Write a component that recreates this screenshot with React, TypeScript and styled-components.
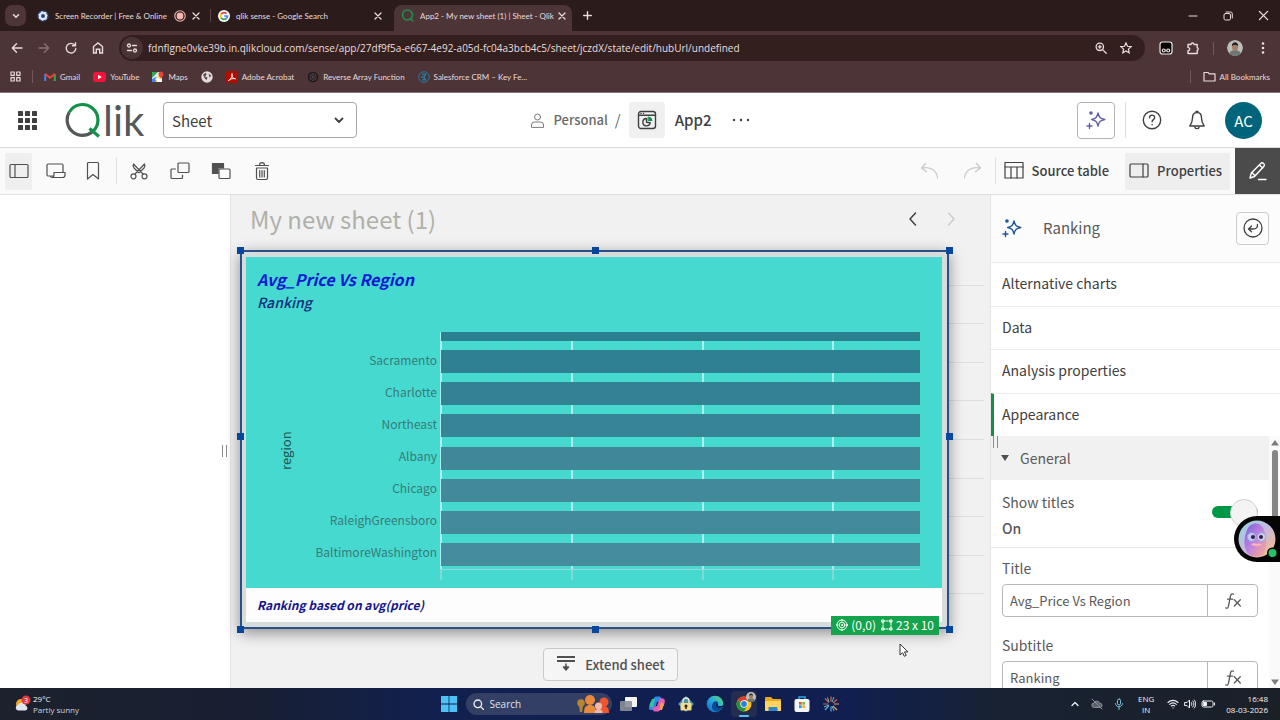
import React from "react";
import styled, { createGlobalStyle } from "styled-components";

const qlikFont = `"Noto Sans CJK SC", "Noto Sans", sans-serif`;
const chromeFont = `"Open Sans", "Noto Sans", sans-serif`;
const smallChromeFont = `Lato, "Open Sans", sans-serif`;

const GlobalStyle = createGlobalStyle`
  * { box-sizing: border-box; }
  body { margin: 0; background: #fff; }
  button { font: inherit; color: inherit; background: none; border: 0; padding: 0; display: inline-flex; align-items: center; justify-content: center; }
  h1, h2, p { margin: 0; font-weight: 400; }
  svg { display: block; flex: none; }
`;

const Page = styled.div`
  display: flex;
  flex-direction: column;
  height: 100vh;
  min-height: 600px;
  overflow: hidden;
  font-family: ${qlikFont};
  color: #404040;
`;

/* ---------- Browser chrome ---------- */

const Browser = styled.div`
  background: #4d3437;
  font-family: ${chromeFont};
  color: #e9dcdc;
  border-bottom: 1px solid #85777a;
`;

const TabStrip = styled.div`
  display: flex;
  align-items: center;
  height: 31px;
  padding-left: 5px;
  background: #2c1b1b;
  font-family: ${smallChromeFont};
  font-size: 8px;
`;

const TabSearch = styled.button`
  width: 21px;
  height: 21px;
  border-radius: 7px;
  background: #4e3538;
  margin-right: 8px;
`;

const Tab = styled.div<{ $active?: boolean; $width: number }>`
  display: flex;
  align-items: center;
  gap: 6px;
  width: ${(p) => p.$width}px;
  height: 26px;
  margin-top: ${(p) => (p.$active ? 5 : 0)}px;
  margin-left: ${(p) => (p.$active ? 6 : 0)}px;
  padding: 0 6px 0 ${(p) => (p.$active ? 7 : 3)}px;
  border-radius: 8px 8px 0 0;
  background: ${(p) => (p.$active ? "#4d3437" : "transparent")};
  padding-bottom: ${(p) => (p.$active ? 5 : 0)}px;
`;

const TabTitle = styled.span`
  flex: 1;
  min-width: 0;
  white-space: nowrap;
  line-height: 16px;
`;

const TabDivider = styled.span`
  width: 1px;
  height: 13px;
  margin: 0 4px;
  background: #5b4345;
`;

const WindowControls = styled.div`
  display: flex;
  align-items: center;
  gap: 25px;
  margin-left: auto;
  padding-right: 11px;
`;

const AddressRow = styled.div`
  display: flex;
  align-items: center;
  height: 34px;
  padding: 0 10px 0 10px;
`;

const NavButtons = styled.div`
  display: flex;
  align-items: center;
  gap: 13px;
  margin-right: 14px;
`;

const AddressBar = styled.label`
  flex: 1;
  display: flex;
  align-items: center;
  gap: 13px;
  height: 26px;
  padding: 0 13px 0 2px;
  border-radius: 13px;
  background: #341f1f;
`;

const SiteInfo = styled.button`
  width: 22px;
  height: 22px;
  border-radius: 50%;
  background: #4a3335;
  margin-right: -8px;
`;

const UrlInput = styled.input`
  flex: 1;
  min-width: 0;
  border: 0;
  padding: 0;
  background: none;
  outline: none;
  font-family: ${chromeFont};
  font-size: 10px;
  line-height: 16px;
  color: #e9dede;
`;

const BrowserTools = styled.div`
  display: flex;
  align-items: center;
  gap: 13px;
  margin-left: 14px;
`;

const Avatar = styled.span`
  display: flex;
  width: 16px;
  height: 16px;
  border-radius: 50%;
  overflow: hidden;
`;

const Bookmarks = styled.nav`
  display: flex;
  align-items: center;
  height: 27px;
  padding: 0 10px 4px;
  font-family: ${smallChromeFont};
  font-size: 8px;
`;

const BookmarkLink = styled.a`
  display: flex;
  align-items: center;
  gap: 4px;
  margin-right: 13px;
  line-height: 14px;
  color: inherit;
  text-decoration: none;
  white-space: nowrap;
`;

const BarDivider = styled.span<{ $gap: number }>`
  width: 1px;
  height: 13px;
  margin: 0 ${(p) => p.$gap}px;
  background: #73575a;
`;

/* ---------- App header ---------- */

const Header = styled.header`
  display: flex;
  align-items: center;
  height: 55px;
  flex: none;
  border-bottom: 1px solid #d9d9d9;
  background: #fff;
`;

const HeaderLeft = styled.div`
  flex: 1 1 0;
  display: flex;
  align-items: center;
  padding-left: 18px;
`;

const HeaderRight = styled.div`
  flex: 1 1 0;
  display: flex;
  align-items: center;
  justify-content: flex-end;
  padding-right: 18px;
`;

const Logo = styled.div`
  display: flex;
  align-items: center;
  gap: 2px;
  width: 77px;
  height: 36px;
  margin: 0 21px 0 28px;
  font-family: Lato, sans-serif;
  font-size: 42px;
  line-height: 36px;
  color: #545859;
`;

const SheetSelect = styled.div`
  position: relative;
  width: 194px;

  select {
    width: 100%;
    height: 36px;
    padding: 0 8px;
    appearance: none;
    border: 1px solid #a6a6a6;
    border-radius: 4px;
    background: #fff;
    font-family: ${qlikFont};
    font-size: 15px;
    color: #404040;
  }
  svg {
    position: absolute;
    right: 12px;
    top: 12px;
    pointer-events: none;
  }
`;

const Breadcrumb = styled.nav`
  display: flex;
  align-items: center;
  font-size: 15px;
  line-height: 24px;
  font-weight: 500;
`;

const SpaceLink = styled.a`
  display: flex;
  align-items: center;
  gap: 8px;
  font-size: 13px;
  color: #6a6a6a;
  text-decoration: none;
`;

const Slash = styled.span`
  margin: 0 8px 0 7px;
  font-weight: 400;
  color: #6a6a6a;
`;

const AppTile = styled.span`
  display: flex;
  align-items: center;
  justify-content: center;
  width: 36px;
  height: 36px;
  margin-right: 10px;
  border-radius: 3px;
  background: #f0f0f0;
`;

const AssistButton = styled.button`
  width: 38px;
  height: 37px;
  border: 1px solid #b3b3b3;
  border-radius: 4px;
`;

const UserBadge = styled.button`
  width: 37px;
  height: 37px;
  border-radius: 50%;
  background: #00657a;
  color: #fff;
  font-size: 15px;
`;

const VRule = styled.span<{ $h: number }>`
  width: 1px;
  height: ${(p) => p.$h}px;
  background: #dedede;
`;

const MoreButton = styled.button`
  && { margin-left: 20px; }
`;

const HeaderTools = styled.div`
  display: flex;
  align-items: center;
  gap: 19px;
  margin-left: 10px;

  button:first-of-type { margin-right: 7px; margin-left: -3px; }
`;

/* ---------- Edit toolbar ---------- */

const Toolbar = styled.div`
  display: flex;
  align-items: center;
  height: 47px;
  flex: none;
  padding-left: 5px;
  border-bottom: 1px solid #e0e0e0;
  background: #fafafa;
  color: #505050;
`;

const ToolButton = styled.button<{ $active?: boolean }>`
  width: 27px;
  height: 37px;
  margin-right: 10px;
  border-radius: 2px;
  background: ${(p) => (p.$active ? "#efefef" : "transparent")};
`;

const TextToolButton = styled.button<{ $active?: boolean }>`
  gap: 8px;
  height: 37px;
  padding: 0 8px 2px 4px;
  border-radius: 2px;
  background: ${(p) => (p.$active ? "#eeeeee" : "transparent")};
  font-size: 13px;
  font-weight: 500;
  white-space: nowrap;
  color: #404040;
`;

const EditToggle = styled.button`
  width: 45px;
  height: 46px;
  margin-left: 5px;
  background: #4b4b4b;
  color: #fff;
`;

const ToolGroup = styled.div`
  display: flex;
  gap: 21px;
  margin-left: 12px;
`;

const HistoryGroup = styled.div`
  display: flex;
  gap: 22px;
  margin: 0 13px 0 auto;
`;

const PanelToggles = styled.div`
  display: flex;
  gap: 8px;
  margin-left: 4px;
`;

/* ---------- Main area ---------- */

const Main = styled.main`
  display: flex;
  flex: 1;
  min-height: 0;
`;

const AssetPanel = styled.aside`
  display: flex;
  align-items: center;
  justify-content: flex-end;
  width: 231px;
  flex: none;
  padding: 18px 3px 0 0;
  border-right: 1px solid #e2e2e2;
  background: #fff;
`;

const SplitGrip = styled.span`
  display: block;
  width: 5px;
  height: 12px;
  border: solid #8c8c8c;
  border-width: 0 1px;
`;

const SheetArea = styled.section`
  display: flex;
  flex-direction: column;
  flex: 1;
  min-width: 0;
  background: #f1f1f1;
`;

const SheetHeader = styled.div`
  display: flex;
  align-items: center;
  justify-content: space-between;
  height: 52px;
  padding: 0 31px 5px 19px;
`;

const SheetTitle = styled.h1`
  font-size: 24px;
  line-height: 36px;
  color: #b0b0aa;
`;

const Pager = styled.div`
  display: flex;
  gap: 22px;
`;

const Canvas = styled.div`
  position: relative;
  display: flex;
  flex: 1;
  min-height: 0;
  margin: 0 6px 0 9px;
  padding: 3px 35px 3px 0;
`;

const GridRows = styled.div`
  position: absolute;
  inset: 0;
  display: flex;
  flex-direction: column;

  span { flex: 1; border-bottom: 1px solid #dedede; }
  span:last-child { border: 0; }
`;

const SelectedObject = styled.div`
  position: relative;
  display: flex;
  flex-direction: column;
  flex: 1;
  min-width: 0;
  padding: 5px 5px 5px 4px;
  border: 2px solid #2a4f86;
  background: #d6dcdc;
  box-shadow: 0 4px 14px rgba(0, 0, 0, 0.42);
`;

const HandleLayer = styled.div`
  position: absolute;
  inset: -2px;
  pointer-events: none;
`;

const Handle = styled.span<{ $x: number; $y: number }>`
  position: absolute;
  left: ${(p) => p.$x}%;
  top: ${(p) => p.$y}%;
  width: 7px;
  height: 7px;
  margin: -3px;
  background: #04479c;
`;

const ChartCard = styled.div`
  display: flex;
  flex-direction: column;
  flex: 1;
  min-height: 0;
  padding: 10px 22px 8px 11px;
  background: #46d9cf;
`;

const ChartTitle = styled.h2`
  font-size: 16px;
  line-height: 24px;
  font-weight: 700;
  font-style: italic;
  color: #1018d2;
`;

const ChartSubtitle = styled.p`
  font-size: 14px;
  line-height: 22px;
  font-weight: 500;
  font-style: italic;
  color: #10307e;
`;

const ChartBody = styled.div`
  display: flex;
  flex: 1;
  min-height: 0;
  margin-top: 19px;
`;

const AxisTitle = styled.div`
  width: 38px;
  padding: 10px 20px 0 0;
  writing-mode: vertical-rl;
  transform: rotate(180deg);
  text-align: center;
  font-size: 13px;
  line-height: 18px;
  color: #24544f;
`;

const Plot = styled.div`
  position: relative;
  flex: 1;
  display: flex;
  flex-direction: column;
  padding-bottom: 10px;
`;

const GridLines = styled.div`
  position: absolute;
  inset: 0 0 0 146px;
  display: grid;
  grid-template-columns: 131fr 131fr 130fr 87fr;

  span {
    width: 2px;
    margin-left: -1px;
    background: linear-gradient(0deg, #7fd9d4 11px, #a9f1ea 11px);
  }
`;

const BarRows = styled.div`
  position: relative;
  display: flex;
  flex: 1;
  flex-direction: column;
  justify-content: space-between;
  padding-bottom: 4px;

  &::after {
    content: "";
    position: absolute;
    inset: auto 0 0 146px;
    height: 1px;
    background: #9bd8d8;
  }
`;

const BarRow = styled.div<{ $h: number }>`
  display: flex;
  align-items: center;
  height: ${(p) => p.$h}px;
`;

const BarLabel = styled.span`
  width: 146px;
  flex: none;
  padding: 0 4px 4px 0;
  text-align: right;
  font-size: 12px;
  line-height: 20px;
  color: #367c78;
`;

const Bar = styled.span`
  flex: 1;
  height: 100%;
`;

const ChartFooter = styled.p`
  height: 34px;
  padding-left: 11px;
  background: #fdfdfd;
  font-size: 12px;
  line-height: 34px;
  font-weight: 700;
  font-style: italic;
  color: #15158c;
`;

const SizeBadge = styled.div`
  position: absolute;
  right: 8px;
  bottom: -8px;
  display: flex;
  align-items: center;
  gap: 3px;
  height: 19px;
  padding: 0 5px 1px;
  background: #14a44d;
  color: #fff;
  font-size: 12px;
  line-height: 18px;
  white-space: nowrap;

  svg + span { margin-right: 2px; }
  span:last-child { margin-right: 0; }
`;

const Pointer = styled.svg`
  position: absolute;
  right: 75px;
  bottom: -25px;
`;

const SheetFooter = styled.div`
  display: flex;
  align-items: center;
  justify-content: center;
  height: 56px;
  padding-top: 9px;
`;

const ExtendButton = styled.button`
  gap: 9px;
  height: 33px;
  padding: 0 12px 1px;
  border: 1px solid #c9c9c9;
  border-radius: 4px;
  background: #f5f5f5;
  font-size: 13px;
  font-weight: 500;
  color: #505050;
`;

/* ---------- Properties panel ---------- */

const Properties = styled.aside`
  position: relative;
  display: flex;
  flex-direction: column;
  width: 290px;
  flex: none;
  border-left: 1px solid #e4e4e4;
  background: #fff;
  font-size: 14px;
`;

const PanelHeader = styled.div`
  display: flex;
  align-items: center;
  height: 67px;
  flex: none;
  padding: 0 11px 1px;
  background: #fcfcfc;

  h2 { flex: 1; margin-left: 21px; font-size: 15px; line-height: 24px; color: #595959; }
`;

const BackButton = styled.button`
  width: 33px;
  height: 33px;
  border: 1px solid #cccccc;
  border-radius: 4px;
`;

const SectionList = styled.div`
  display: flex;
  flex-direction: column;
  height: 174px;
  flex: none;
`;

const SectionButton = styled.button<{ $active?: boolean }>`
  flex: 1;
  justify-content: flex-start;
  padding: 0 0 2px ${(p) => (p.$active ? 8 : 11)}px;
  border-top: 1px solid #ebebeb;
  border-left: ${(p) => (p.$active ? "3px solid #10914a" : "0")};
  color: #404040;
`;

const SectionScroll = styled.div`
  display: flex;
  flex: 1;
  min-height: 0;
  overflow: hidden;
`;

const SectionContent = styled.div`
  flex: 1;
  min-width: 0;
  color: #595959;
`;

const GroupButton = styled.button`
  && {
    width: 100%;
    height: 44px;
    justify-content: flex-start;
    gap: 10px;
    padding: 0 0 1px 9px;
    background: #f1f1f1;
  }
`;

const ToggleField = styled.label`
  display: flex;
  align-items: center;
  justify-content: space-between;
  height: 68px;
  padding: 0 11px;
  border-bottom: 1px solid #e8e8e8;
  line-height: 26px;

  > span { padding-top: 3px; }
  strong { display: block; font-weight: 500; }
`;

const Switch = styled.input`
  appearance: none;
  position: relative;
  width: 46px;
  height: 12px;
  margin: 0 0 4px;
  border-radius: 6px;
  background: #009845;

  &::after {
    content: "";
    position: absolute;
    right: 0;
    top: -7px;
    width: 26px;
    height: 26px;
    border: 1px solid #d0d0d0;
    border-radius: 50%;
    background: #f4f4f4;
  }
`;

const TextField = styled.div`
  padding: 8px 11px 0;
  height: 77px;

  label { display: block; height: 28px; line-height: 24px; }
`;

const InputGroup = styled.div`
  display: flex;
  height: 33px;
  border: 1px solid #b8b8b8;
  border-radius: 4px;

  input {
    flex: 1;
    min-width: 0;
    padding: 0 7px;
    border: 0;
    background: none;
    font-family: ${qlikFont};
    font-size: 13px;
    color: #595959;
  }
  button { width: 50px; border-left: 1px solid #b8b8b8; }
`;

const ScrollTrack = styled.div`
  display: flex;
  flex-direction: column;
  align-items: center;
  justify-content: space-between;
  width: 11px;
  padding: 3px 0 2px;
  background: #fafafa;
`;

const ScrollThumb = styled.span`
  width: 6px;
  height: 84px;
  margin: 4px 0 auto;
  border-radius: 3px;
  background: #868686;
`;

const PanelGrip = styled.div`
  position: absolute;
  left: 2px;
  top: 241px;
`;

const AssistantBubble = styled.button`
  position: absolute;
  right: 0;
  top: 321px;
  width: 46px;
  height: 46px;
  border-radius: 23px 0 0 23px;
  background: #050505;
`;

/* ---------- Taskbar ---------- */

const Taskbar = styled.footer`
  display: grid;
  grid-template-columns: 1fr auto 1fr;
  align-items: center;
  height: 32px;
  flex: none;
  background: linear-gradient(90deg, #1c212c 0%, #181f33 20%, #11204f 34%, #101f50 66%, #182233 78%, #1b2027 100%);
  font-family: ${chromeFont};
  font-size: 8px;
  line-height: 11px;
  color: #f0f2f5;
`;

const Weather = styled.div`
  display: flex;
  align-items: center;
  gap: 2px;
  padding-left: 13px;
  small { display: block; font-size: 8px; color: #cfd3da; }
`;

const TaskApps = styled.div`
  display: flex;
  align-items: center;
  gap: 11px;
`;

const TaskSearch = styled.label`
  display: flex;
  align-items: center;
  gap: 6px;
  width: 146px;
  height: 22px;
  margin: 0 -3px 0 -2px;
  padding: 0 2px 0 7px;
  border-radius: 11px;
  background: #343f66;

  input {
    flex: 1;
    min-width: 0;
    padding: 0;
    border: 0;
    background: none;
    font-family: ${chromeFont};
    font-size: 10px;
    color: #fff;
  }
  input::placeholder { color: #dfe3ec; opacity: 1; }
`;

const Tray = styled.div`
  display: flex;
  align-items: center;
  justify-content: flex-end;
  gap: 5px;
  padding-right: 12px;
  text-align: right;
`;

const TrayIcons = styled.span`
  display: flex;
  gap: 11px;
`;

const Lang = styled.span`
  margin: 0 8px 0 9px;
  text-align: center;
`;

const Clock = styled.span`
  margin-left: 6px;
`;

const ActiveApp = styled.span`
  position: relative;
  display: flex;
  align-items: center;
  justify-content: center;
  width: 26px;
  height: 26px;
  margin: 0 -4px;
  border-radius: 4px;
  background: #242c4f;

  &::after {
    content: "";
    position: absolute;
    bottom: 0;
    width: 10px;
    height: 2px;
    border-radius: 1px;
    background: #5cc0f0;
  }
`;

const MiniAvatar = styled.span`
  position: absolute;
  right: 1px;
  top: 1px;
`;

/* ---------- Browser helpers ---------- */

const NewTabGap = styled.span`
  width: 11px;
`;

const PushRight = styled.span`
  flex: 1;
`;

const VRuleDark = styled.span`
  width: 1px;
  height: 13px;
  background: #73575a;
`;

const FolderLink = styled(BookmarkLink)`
  margin-right: 0;
`;

/* ---------- Icons ---------- */

type IconProps = {
  w?: number;
  h?: number;
  box?: string;
  sw?: number;
  color?: string;
  children: React.ReactNode;
};

const Icon = ({ w = 20, h, box, sw = 1.2, color = "currentColor", children }: IconProps) => (
  <svg
    width={w}
    height={h ?? w}
    viewBox={box ?? `0 0 ${w} ${h ?? w}`}
    fill="none"
    stroke={color}
    strokeWidth={sw}
    strokeLinecap="round"
    strokeLinejoin="round"
    aria-hidden="true"
  >
    {children}
  </svg>
);

const CloseIcon = ({ size = 8, sw = 1.3 }: { size?: number; sw?: number }) => (
  <Icon w={size} box="0 0 8 8" sw={sw}><path d="M1 1l6 6M7 1L1 7" /></Icon>
);

const SparkIcon = ({ color }: { color: string }) => (
  <Icon w={20} sw={1.4} color={color}>
    <path d="M12 3c.9 4.200 2.200 5.500 6.800 6.500-4.600 1-5.900 2.300-6.800 6.500-.9-4.200-2.200-5.500-6.300-6.500C9.800 8.500 11.100 7.200 12 3z" />
    <circle cx="5" cy="3" r="1.100" fill={color} />
    <path d="M3.500 13.500v5M1 16h5" />
  </Icon>
);

const FxIcon = () => (
  <Icon w={18} sw={1.3}>
    <path d="M9.500 2.200C7.500 1 6.700 2.800 6.400 4.500L4.500 14c-.3 1.700-1.200 2.700-2.700 1.900M3.500 7.200h5.200M10.300 7.700l6 6.300M16.300 7.700l-6 6.300" />
  </Icon>
);

const ChromeLogo = () => (
  <svg width="16" height="16" viewBox="0 0 16 16" aria-hidden="true">
    <circle cx="8" cy="8" r="7.500" fill="#fbc116" />
    <path d="M8 8L1.500 4.250A7.500 7.500 0 0 1 14.500 4.250L8 4.250z" fill="#e33b2e" />
    <path d="M8 8L1.500 4.250A7.500 7.500 0 0 0 8 15.500L11.200 9.900z" fill="#229342" />
    <circle cx="8" cy="8" r="3.700" fill="#fff" />
    <circle cx="8" cy="8" r="2.900" fill="#2f7de1" />
  </svg>
);

const Portrait = ({ size = 16 }: { size?: number }) => (
  <svg width={size} height={size} viewBox="0 0 16 16" aria-hidden="true">
    <circle cx="8" cy="8" r="8" fill="#b9c0b8" />
    <path d="M2 14c1-3 3-4 6-4s5 1 6 4l-3 2H5z" fill="#6f7775" />
    <ellipse cx="8" cy="7" rx="3" ry="4" fill="#a87c65" />
    <path d="M4.800 6c0-5 6.400-5 6.400 0-1.500-1.500-5-1.500-6.400 0z" fill="#2a2422" />
  </svg>
);

const bars = [
  { label: "Sacramento", color: "#2f8093" },
  { label: "Charlotte", color: "#338294" },
  { label: "Northeast", color: "#368496" },
  { label: "Albany", color: "#3f8799" },
  { label: "Chicago", color: "#42899b" },
  { label: "RaleighGreensboro", color: "#438b9c" },
  { label: "BaltimoreWashington", color: "#458d9e" },
];

const handles = [
  [0, 0], [50, 0], [100, 0],
  [0, 49], [100, 49],
  [0, 100], [50, 100], [100, 100],
];

const BrowserChrome = () => (
  <Browser>
    <TabStrip>
      <TabSearch aria-label="Search tabs">
        <Icon w={8} sw={1.5}><path d="M1.500 2.700L4 5.200l2.500-2.500" /></Icon>
      </TabSearch>
      <Tab $width={172}>
        <svg width="12" height="12" viewBox="0 0 12 12">
          <circle cx="6" cy="6" r="5" fill="#dfe8f7" />
          <circle cx="6" cy="6" r="5" fill="none" stroke="#2a4c8f" strokeWidth="1.500" strokeDasharray="3 1.500" />
          <circle cx="6" cy="6" r="2" fill="#27457f" />
        </svg>
        <TabTitle>Screen Recorder | Free &amp; Online</TabTitle>
        <Icon w={12} box="0 0 11 11" sw={1} color="#f3b9ae"><circle cx="5.500" cy="5.500" r="4.800" /><circle cx="5.500" cy="5.500" r="2.600" fill="#f3b9ae" /></Icon>
        <CloseIcon />
      </Tab>
      <TabDivider />
      <Tab $width={173}>
        <svg width="12" height="12" viewBox="0 0 12 12">
          <circle cx="6" cy="6" r="6" fill="#fff" />
          <g fill="none" strokeWidth="1.700">
            <path d="M8.600 3.700A3.500 3.500 0 0 0 3 4.300" stroke="#ea4335" />
            <path d="M3 4.300a3.500 3.500 0 0 0 0 3.400" stroke="#fbbc05" />
            <path d="M3 7.700a3.500 3.500 0 0 0 5.300.8" stroke="#34a853" />
            <path d="M8.300 8.500A3.500 3.500 0 0 0 9.500 6H6.200" stroke="#4285f4" />
          </g>
        </svg>
        <TabTitle>qlik sense - Google Search</TabTitle>
        <CloseIcon />
      </Tab>
      <Tab $active $width={178}>
        <Icon w={13} sw={1.500} color="#19944a"><circle cx="6.500" cy="6" r="5" /><path d="M9 9.500l3 2.500" /></Icon>
        <TabTitle>App2 - My new sheet (1) | Sheet - Qlik</TabTitle>
        <CloseIcon />
      </Tab>
      <NewTabGap />
      <Icon w={9} sw={1.400}><path d="M4.500.7v7.600M.7 4.500h7.600" /></Icon>
      <WindowControls>
        <Icon w={10} sw={1}><path d="M1 5h8" /></Icon>
        <Icon w={10} sw={1}><rect x="1" y="2.500" width="6.500" height="6.500" rx="1.500" /><path d="M3 1h4.500A1.800 1.800 0 0 1 9.300 2.800V7" /></Icon>
        <CloseIcon size={11} sw={1} />
      </WindowControls>
    </TabStrip>
    <AddressRow>
      <NavButtons>
        <Icon w={14} sw={1.400}><path d="M12 7H2.500M6.500 2.800L2.300 7l4.200 4.200" /></Icon>
        <Icon w={14} sw={1.400} color="#8b7174"><path d="M2 7h9.500M7.500 2.800L11.700 7l-4.200 4.200" /></Icon>
        <Icon w={14} sw={1.400}><path d="M11 4.500A4.800 4.800 0 1 0 11.800 7.500M11.500 1.800v3H8.400" /></Icon>
        <Icon w={14} sw={1.400}><path d="M2.500 12V5.500L7 2l4.500 3.500V12H8.700V8.300H5.300V12z" strokeLinejoin="miter" /></Icon>
      </NavButtons>
      <AddressBar>
        <SiteInfo aria-label="Site information">
          <Icon w={12} sw={1.300}><circle cx="3" cy="3.500" r="1.500" /><path d="M6.500 3.500h4M1.500 8.500h4" /><circle cx="9" cy="8.500" r="1.500" /></Icon>
        </SiteInfo>
        <UrlInput
          aria-label="Address"
          defaultValue="fdnflgne0vke39b.in.qlikcloud.com/sense/app/27df9f5a-e667-4e92-a05d-fc04a3bcb4c5/sheet/jczdX/state/edit/hubUrl/undefined"
        />
        <Icon w={12} sw={1.300}><circle cx="4.800" cy="4.800" r="3.700" /><path d="M7.600 7.600l3.600 3.600M3.300 4.800h3M4.800 3.300v3" /></Icon>
        <Icon w={12} sw={1.200}><path d="M6 .9l1.500 3.400 3.700.3-2.800 2.500.8 3.700L6 8.900l-3.200 1.900.8-3.700L.8 4.600l3.700-.3z" strokeLinejoin="miter" /></Icon>
      </AddressBar>
      <BrowserTools>
        <Icon w={14} sw={1.200} color="#f2ecec"><rect x="1" y="1" width="12" height="12" rx="2.500" fill="#050505" /><circle cx="4.800" cy="9.500" r="1.500" /><circle cx="9.200" cy="9.500" r="1.500" /></Icon>
        <Icon w={14} sw={1.400}><path d="M2 3.500h3a1.500 1.500 0 0 1 3 0h3.200v3.200a1.500 1.500 0 0 1 0 2.800V12.500H2V9.800a1.700 1.700 0 0 0 0-3.400z" /></Icon>
        <VRuleDark />
        <Avatar><Portrait /></Avatar>
        <Icon w={14} sw={0}><g fill="#eee2e2"><circle cx="7" cy="2.500" r="1.300" /><circle cx="7" cy="7" r="1.300" /><circle cx="7" cy="11.500" r="1.300" /></g></Icon>
      </BrowserTools>
    </AddressRow>
    <Bookmarks>
      <Icon w={11} sw={1.200}><rect x="1" y="1" width="3.300" height="3.300" /><rect x="6.700" y="1" width="3.300" height="3.300" /><rect x="1" y="6.700" width="3.300" height="3.300" /><rect x="6.700" y="6.700" width="3.300" height="3.300" /></Icon>
      <BarDivider $gap={11} />
      <BookmarkLink href="#gmail">
        <svg width="12" height="10" viewBox="0 0 12 10" fill="none" strokeWidth="2">
          <path d="M1.200 9V2" stroke="#4285f4" /><path d="M10.800 9V2" stroke="#34a853" /><path d="M1 1.800l5 4 5-4" stroke="#ea4335" />
        </svg>
        Gmail
      </BookmarkLink>
      <BookmarkLink href="#youtube">
        <svg width="13" height="10" viewBox="0 0 13 10"><rect width="13" height="10" rx="3" fill="#f5133a" /><path d="M5 2.800v4.400L8.800 5z" fill="#fff" /></svg>
        YouTube
      </BookmarkLink>
      <BookmarkLink href="#maps">
        <svg width="12" height="12" viewBox="0 0 12 12">
          <rect x="0" y="1" width="10" height="10" fill="#e7ecef" /><path d="M0 1h6L0 7z" fill="#34a853" /><path d="M0 11L9 2l1 1v3L5 11z" fill="#fbd04a" /><path d="M0 8v3h3l3-3-2-2z" fill="#4285f4" /><path d="M6 6l4 5H6L3 8z" fill="#fff" />
          <path d="M9 7.500C7 5 6.500 4.300 6.500 3a2.500 2.500 0 0 1 5 0c0 1.300-.5 2-2.500 4.500z" fill="#ea4335" />
        </svg>
        Maps
      </BookmarkLink>
      <BookmarkLink href="#site" aria-label="Website">
        <svg width="12" height="12" viewBox="0 0 12 12"><circle cx="6" cy="6" r="5.700" fill="#e4dcdc" /><path d="M2 3.500l3-1.800.5 2L4 5.500l2.500 1L5.500 9 3.800 7.500zM7.500 2.500l2.800 2.300L8.500 6.500z" fill="#59474a" /></svg>
      </BookmarkLink>
      <BookmarkLink href="#acrobat">
        <svg width="12" height="12" viewBox="0 0 12 12"><rect width="12" height="12" rx="2" fill="#b30b00" /><path d="M2.500 9.500C6 7.500 6.500 4 6 2.500 5.300 5.500 7 7.500 9.500 7.800 7 7.200 4.500 7.800 2.500 9.500z" fill="none" stroke="#fff" /></svg>
        Adobe Acrobat
      </BookmarkLink>
      <BookmarkLink href="#array">
        <svg width="12" height="12" viewBox="0 0 12 12"><circle cx="6" cy="6" r="5.200" fill="#1b1718" /><path d="M3 4l3-1.700L9 4v4L6 9.700 3 8zM3 4l6 4M9 4L3 8M6 2.300v7.400" fill="none" stroke="#56494b" strokeWidth=".8" /></svg>
        Reverse Array Function
      </BookmarkLink>
      <BookmarkLink href="#salesforce">
        <svg width="12" height="12" viewBox="0 0 12 12" fill="none" stroke="#2a789f"><circle cx="6" cy="6" r="5.300" /><path d="M4.200 3.200h3.300L5.800 6l1.700 2.800H4.200M3 6h3" strokeWidth="1.500" /></svg>
        Salesforce CRM – Key Fe...
      </BookmarkLink>
      <PushRight />
      <BarDivider $gap={12} />
      <FolderLink href="#all">
        <Icon w={13} h={11} sw={1.200}><path d="M1 1.500h4l1.300 1.300H12V10H1z" /></Icon>
        All Bookmarks
      </FolderLink>
    </Bookmarks>
  </Browser>
);

const AppHeader = () => (
  <Header>
    <HeaderLeft>
      <button aria-label="App launcher">
        <svg width="19" height="19" viewBox="0 0 19 19" fill="#404040">
          {[0, 7, 14].map((y) => [0, 7, 14].map((x) => <rect key={`${x}-${y}`} x={x} y={y} width="5" height="5" rx=".6" />))}
        </svg>
      </button>
      <Logo aria-label="Qlik">
        <svg width="36" height="36" viewBox="0 0 36 36" fill="none" strokeWidth="3.200">
          <path d="M4.200 10.300A15.400 15.400 0 0 0 27.400 29.800" stroke="#545859" />
          <path d="M4.200 10.300A15.400 15.400 0 1 1 27.400 29.800" stroke="#10924b" />
          <path d="M24.500 26.500l9.500 8" stroke="#10924b" />
        </svg>
        <span>lik</span>
      </Logo>
      <SheetSelect>
        <select aria-label="View" defaultValue="Sheet"><option>Sheet</option></select>
        <Icon w={12} sw={1.800}><path d="M2.500 4.500L6 8l3.500-3.500" /></Icon>
      </SheetSelect>
    </HeaderLeft>
    <Breadcrumb>
      <SpaceLink href="#personal">
        <Icon w={15} sw={1} color="#7a7a7a"><circle cx="7.500" cy="4" r="3" /><path d="M1.500 14v-2a3 3 0 0 1 3-3h6a3 3 0 0 1 3 3v2z" /></Icon>
        Personal
      </SpaceLink>
      <Slash>/</Slash>
      <AppTile>
        <Icon w={20} sw={1.400}>
          <rect x="1.500" y="1.500" width="17" height="17" rx="2.500" />
          <path d="M2 5.200h16" /><path d="M4 3.400h.1M6.500 3.400h.1" />
          <path d="M9.500 8.500a3.700 3.700 0 1 0 3.700 4.200l-3.700-.5z" />
          <path d="M11.500 7a3.700 3.700 0 0 1 3.500 3.500h-3.500z" fill="#10924b" stroke="#10924b" strokeWidth="1" />
        </Icon>
      </AppTile>
      App2
      <MoreButton aria-label="More">
        <Icon w={18} sw={0}><g fill="#404040"><circle cx="2" cy="9" r="1.200" /><circle cx="9" cy="9" r="1.200" /><circle cx="16" cy="9" r="1.200" /></g></Icon>
      </MoreButton>
    </Breadcrumb>
    <HeaderRight>
      <AssistButton aria-label="Assistant"><SparkIcon color="#655dab" /></AssistButton>
      <HeaderTools>
        <VRule $h={36} />
        <button aria-label="Help"><Icon w={20} sw={1.400}><circle cx="10" cy="10" r="8.700" /><path d="M7.500 7.800c0-3.600 5.200-3.400 5.200-.3 0 2-2.600 2.200-2.600 4.200M10.100 14.500v.2" /></Icon></button>
        <button aria-label="Notifications"><Icon w={18} h={20} sw={1.400}><path d="M9 2.500C5.500 2.500 4.500 5 4.500 8c0 4-1.200 6-2.700 8h14.400c-1.500-2-2.700-4-2.700-8 0-3-1-5.500-4.500-5.500zM8 1.500h2M7 17.500c.5 1.500 3.500 1.500 4 0" /></Icon></button>
        <UserBadge>AC</UserBadge>
      </HeaderTools>
    </HeaderRight>
  </Header>
);

const EditToolbar = () => (
  <Toolbar>
    <ToolButton $active aria-label="Assets">
      <Icon><rect x="1" y="3.500" width="18" height="13" rx="1" /><path d="M6 3.500v13" /></Icon>
    </ToolButton>
    <ToolButton aria-label="Sheets">
      <Icon><path d="M4.500 15H2.200A1.200 1.200 0 0 1 1 13.800V4.200A1.200 1.200 0 0 1 2.200 3h13.600A1.200 1.200 0 0 1 17 4.200V11M8 11.500h11v2.500a2.500 2.500 0 0 1-2.500 2.500H6c1.500 0 2-1 2-2.500zM8 14c0 1.500-.5 2.500-2 2.500S4.500 15.500 4.500 15H8" /></Icon>
    </ToolButton>
    <ToolButton aria-label="Bookmarks">
      <Icon><path d="M4.500 2.500a1 1 0 0 1 1-1h9a1 1 0 0 1 1 1V18L10 13.500 4.500 18z" /></Icon>
    </ToolButton>
    <VRule $h={26} />
    <ToolGroup>
      <button aria-label="Cut"><Icon><circle cx="4.500" cy="15.300" r="2.500" /><circle cx="15.500" cy="15.300" r="2.500" /><path d="M6 13L15.500 3c1 1.500.5 2.500-.5 4L10.500 11.500M14 13L4.500 3c-1 1.500-.5 2.500.5 4l4.500 4.500" /></Icon></button>
      <button aria-label="Copy"><Icon><rect x="8" y="2" width="11" height="9.500" rx="1" /><path d="M5.500 8H2a1 1 0 0 0-1 1v7.500a1 1 0 0 0 1 1h9.500a1 1 0 0 0 1-1V14" /></Icon></button>
      <button aria-label="Paste"><Icon><path d="M1.500 2.500h11V7H7v5.500H1.500z" fill="currentColor" /><rect x="8" y="8" width="11" height="9.500" rx="1" /></Icon></button>
      <button aria-label="Delete"><Icon><path d="M3.500 4.500h13M7.500 4.500c0-3.800 5-3.800 5 0M4.500 7v10a1.500 1.500 0 0 0 1.500 1.500h8a1.500 1.500 0 0 0 1.500-1.500V7zM7.700 9.500V16M10 9.500V16M12.300 9.500V16" /></Icon></button>
    </ToolGroup>
    <HistoryGroup>
      <button aria-label="Undo"><Icon color="#c9c9c9"><path d="M5.500 2.500L1.500 7l5 3.800M2 7c8-1.800 15 2.500 15.500 10" /></Icon></button>
      <button aria-label="Redo"><Icon color="#c9c9c9"><path d="M14.500 2.500l4 4.500-5 3.800M18 7C10 5.200 3 9.500 2.500 17" /></Icon></button>
    </HistoryGroup>
    <VRule $h={26} />
    <PanelToggles>
      <TextToolButton>
        <Icon><rect x="1" y="2.500" width="18" height="15.500" /><path d="M1 7h18M7 7v11M13 7v11" /></Icon>
        Source table
      </TextToolButton>
      <TextToolButton $active>
        <Icon><rect x="1" y="4" width="18" height="13" rx="1" /><path d="M14 4v13" /></Icon>
        Properties
      </TextToolButton>
    </PanelToggles>
    <EditToggle aria-label="Edit sheet">
      <Icon sw={1.400}><path d="M2 17l1.300-5L13 2.200c1.500-1.300 4.500 1.300 3 3L6.500 15.500zM11.500 4l3.200 3M4 11.500L6.800 14.500M10.500 18.500H18" /></Icon>
    </EditToggle>
  </Toolbar>
);

const RankingChart = () => (
  <SelectedObject>
    <ChartCard>
      <ChartTitle>Avg_Price Vs Region</ChartTitle>
      <ChartSubtitle>Ranking</ChartSubtitle>
      <ChartBody>
        <AxisTitle>region</AxisTitle>
        <Plot>
          <GridLines><span /><span /><span /><span /></GridLines>
          <BarRows>
            <BarRow $h={9}><BarLabel /><Bar style={{ background: "#2a808f" }} /></BarRow>
            {bars.map((b) => (
              <BarRow key={b.label} $h={23}>
                <BarLabel>{b.label}</BarLabel>
                <Bar style={{ background: b.color }} />
              </BarRow>
            ))}
          </BarRows>
        </Plot>
      </ChartBody>
    </ChartCard>
    <ChartFooter>Ranking based on avg(price)</ChartFooter>
    <HandleLayer>
      {handles.map(([x, y]) => <Handle key={`${x}-${y}`} $x={x} $y={y} />)}
    </HandleLayer>
    <SizeBadge>
      <Icon w={12} sw={1}><circle cx="6" cy="6" r="5" /><circle cx="6" cy="6" r="2.800" /><circle cx="6" cy="6" r=".6" /><path d="M6 0v2M6 10v2M0 6h2M10 6h2" /></Icon>
      <span>(0,0)</span>
      <Icon w={12} sw={1}><rect x="2" y="2" width="8" height="8" strokeDasharray="2 1.200" /><path d="M1 1h2v2H1zM9 1h2v2H9zM1 9h2v2H1zM9 9h2v2H9z" /></Icon>
      <span>23 x 10</span>
    </SizeBadge>
  </SelectedObject>
);

const PropertiesPanel = () => (
  <Properties>
    <PanelHeader>
      <SparkIcon color="#1d5799" />
      <h2>Ranking</h2>
      <BackButton aria-label="Back">
        <Icon sw={1.300}><circle cx="10" cy="10" r="9" /><path d="M14.500 6.500c.3 3-1.500 4.500-4.500 4.500H6M8.500 8L5.500 11l3 2.800" /></Icon>
      </BackButton>
    </PanelHeader>
    <SectionList>
      <SectionButton>Alternative charts</SectionButton>
      <SectionButton>Data</SectionButton>
      <SectionButton>Analysis properties</SectionButton>
      <SectionButton $active>Appearance</SectionButton>
    </SectionList>
    <SectionScroll>
      <SectionContent>
        <GroupButton>
          <svg width="10" height="8" viewBox="0 0 10 8" fill="#505050"><path d="M1 1h8L5 7z" /></svg>
          General
        </GroupButton>
        <ToggleField>
          <span>Show titles<strong>On</strong></span>
          <Switch type="checkbox" role="switch" defaultChecked />
        </ToggleField>
        <TextField>
          <label htmlFor="title">Title</label>
          <InputGroup><input id="title" defaultValue="Avg_Price Vs Region" /><button aria-label="Title expression"><FxIcon /></button></InputGroup>
        </TextField>
        <TextField>
          <label htmlFor="subtitle">Subtitle</label>
          <InputGroup><input id="subtitle" defaultValue="Ranking" /><button aria-label="Subtitle expression"><FxIcon /></button></InputGroup>
        </TextField>
      </SectionContent>
      <ScrollTrack>
        <svg width="8" height="7" viewBox="0 0 8 7" fill="#7d7d7d"><path d="M4 1l4 5.500H0z" /></svg>
        <ScrollThumb />
        <svg width="8" height="7" viewBox="0 0 8 7" fill="#7d7d7d"><path d="M0 .5h8L4 6z" /></svg>
      </ScrollTrack>
    </SectionScroll>
    <PanelGrip><SplitGrip /></PanelGrip>
    <AssistantBubble aria-label="Open assistant">
      <svg width="46" height="46" viewBox="0 0 46 46">
        <defs>
          <linearGradient id="sky" x1="0" y1="0" x2="1" y2="1"><stop offset="0" stopColor="#8fd6dc" /><stop offset=".5" stopColor="#c8b8e0" /><stop offset="1" stopColor="#ffc06e" /></linearGradient>
          <linearGradient id="face" x1="0" y1="0" x2="1" y2="1"><stop offset="0" stopColor="#7a5be0" /><stop offset=".5" stopColor="#c184dd" /><stop offset="1" stopColor="#ffb083" /></linearGradient>
        </defs>
        <circle cx="23" cy="23" r="18.500" fill="url(#sky)" />
        <path d="M14 38C9 30 10 22 13 14c3-8 14-9 17 0 2 6 3 12 2 18l-3 7c-5 3-11 2-15-1z" fill="url(#face)" />
        <g fill="#d9e5f5" fillOpacity=".7" stroke="#7fb7ea"><circle cx="17.500" cy="21" r="4.200" /><circle cx="27.500" cy="21" r="4.200" /></g>
        <circle cx="19" cy="21" r="2" fill="#2d2347" /><circle cx="27" cy="21" r="2" fill="#2d2347" />
        <path d="M17 29c3-3 4-1 5.500-1S26 26.500 28 29c-4 1.500-7 1.500-11 0z" fill="#f7b3b9" />
        <circle cx="38.500" cy="37" r="5.500" fill="#050505" /><circle cx="38.500" cy="37" r="4" fill="#26c267" />
      </svg>
    </AssistantBubble>
  </Properties>
);

const WindowsTaskbar = () => (
  <Taskbar>
    <Weather>
      <svg width="18" height="18" viewBox="0 0 18 18">
        <circle cx="8" cy="9" r="5" fill="#f5a623" /><path d="M5 15.500a2.800 2.800 0 0 1 0-5.500 4 4 0 0 1 7.500.8 2.400 2.400 0 0 1 0 4.700z" fill="#dfe6ef" />
        <circle cx="13" cy="5" r="4.500" fill="#d93a3a" /><text x="13" y="7.500" fontSize="7" textAnchor="middle" fill="#fff">3</text>
      </svg>
      <span>29°C<small>Partly sunny</small></span>
    </Weather>
    <TaskApps>
      <svg width="16" height="16" viewBox="0 0 16 16" fill="#4cc2f5"><path d="M0 0h7.600v7.600H0zM8.400 0H16v7.600H8.400zM0 8.400h7.600V16H0zM8.400 8.400H16V16H8.400z" /></svg>
      <TaskSearch>
        <Icon w={11} sw={1.300}><circle cx="4.800" cy="4.800" r="3.800" /><path d="M7.600 7.600L10.500 10.500" /></Icon>
        <input placeholder="Search" aria-label="Search" />
        <svg width="34" height="20" viewBox="0 0 34 20">
          <g fill="#b5852f"><circle cx="5" cy="9" r="3.800" /><path d="M3 12h4l-1 6H4z" /></g>
          <g fill="#e88a3a"><circle cx="14" cy="6" r="5" /><path d="M8 19c0-6 2-8 6-8s6 2 6 8z" /></g>
          <g fill="#f0562f"><circle cx="28" cy="8" r="4.500" /><path d="M24 19c0-5 1-7 4-7s5 2 5 7z" /></g>
          <g fill="#f3b9a8"><circle cx="22.500" cy="12" r="3.500" /><path d="M18.500 19c0-3 1.500-4 4-4s4 1 4 4z" /></g>
        </svg>
      </TaskSearch>
      <svg width="17" height="16" viewBox="0 0 17 16"><rect x="5" y="1" width="12" height="10" rx="1" fill="#f5f5f5" /><rect x="0" y="5" width="12" height="10" rx="1" fill="#8b8f98" fillOpacity=".9" /></svg>
      <svg width="18" height="18" viewBox="0 0 18 18">
        <path d="M6 3c.5-1.500 1.500-1.500 5-1.500 2 0 2 2 2.800 4L9 7 7 13c-.6 2-2 2-4 2-3-.2-2-3-1.200-6z" fill="#2c8be8" />
        <path d="M12 15c-.5 1.500-1.500 1.500-5 1.500-2 0-2-2-2.800-4L9 11l2-6c.6-2 2-2 4-1.500 2.500.5 2 3.500 1.200 6z" fill="#e65bb5" />
        <path d="M1.800 9L4 4h3L5 12H2z" fill="#35c3a1" /><path d="M16.200 9L14 15h-3l2-8z" fill="#f59a52" />
      </svg>
      <svg width="18" height="18" viewBox="0 0 18 18"><path d="M9 1l8 8-8 8-8-8z" fill="#4e93a8" /><path d="M6 8V6a3 3 0 0 1 6 0v2" fill="none" stroke="#e8e3d0" strokeWidth="1.500" /><rect x="3.500" y="8" width="11" height="7.500" rx="1" fill="#f2dc8a" /><circle cx="9" cy="11" r="1.500" fill="#222" /><path d="M8.300 11h1.400v3H8.300z" fill="#222" /></svg>
      <svg width="18" height="18" viewBox="0 0 18 18">
        <defs><linearGradient id="edge" x1="0" y1="1" x2="1" y2="0"><stop offset="0" stopColor="#1466c4" /><stop offset=".5" stopColor="#25a8df" /><stop offset="1" stopColor="#5ee06c" /></linearGradient></defs>
        <circle cx="9" cy="9" r="8.300" fill="url(#edge)" />
        <path d="M7 8c2-3 6-1.500 5 1.200-.8 1.800 1 3 5.300 1.300-1.300 4-4.500 6.200-7.500 6C5.800 15.500 5 11 7 8z" fill="#0c4a96" />
        <path d="M12 9.200c-.8 1.800 1 3 5.300 1.300L16.500 12c-3 1.500-8 0-6-3.500z" fill="#101f50" />
      </svg>
      <ActiveApp><ChromeLogo /><MiniAvatar><Portrait size={10} /></MiniAvatar></ActiveApp>
      <svg width="18" height="16" viewBox="0 0 18 16"><path d="M1 2a1 1 0 0 1 1-1h5l2 2h7a1 1 0 0 1 1 1v11H1z" fill="#e8a825" /><rect x="1" y="5" width="16" height="10" rx="1" fill="#ffd35c" /><path d="M4.500 15v-3a1 1 0 0 1 1-1h7a1 1 0 0 1 1 1v3z" fill="#2d83d0" /></svg>
      <svg width="18" height="18" viewBox="0 0 18 18"><path d="M6 5V2h6v3" fill="none" stroke="#2aa5e8" strokeWidth="1.500" /><rect x="1.500" y="4" width="15" height="13" rx="2" fill="#f3f5f8" /><path d="M6 7h2.700v2.700H6z" fill="#e8503a" /><path d="M9.300 7H12v2.700H9.300z" fill="#7cba3a" /><path d="M6 10.300h2.700V13H6z" fill="#2a9de0" /><path d="M9.300 10.300H12V13H9.300z" fill="#f5b82e" /></svg>
      <svg width="18" height="18" viewBox="0 0 18 18" fill="none" strokeWidth="1.200"><path d="M9 6.500V1.500M11 8l4-3.500" stroke="#e35c52" /><path d="M12 9h5M11 11l4 4" stroke="#e8a06a" /><path d="M9 11.500v5M7 10.500L3 15" stroke="#5aa7e0" /><path d="M6 9H1M7 7.500L3 3.500" stroke="#c9654a" /><path d="M10 7l2-5M10 11l2 5M7 10l-5 2M7 7L5.500 2.500" stroke="#70b7b0" strokeWidth="1" /></svg>
    </TaskApps>
    <Tray>
      <TrayIcons>
        <Icon w={10} h={12} sw={1.300}><path d="M2 7.500l3-3 3 3" /></Icon>
        <Icon w={12} sw={1} color="#8c9299"><path d="M3 9.500a2.200 2.200 0 0 1 0-4.500 3 3 0 0 1 5.700.3 2.100 2.100 0 0 1 .5 4.200z" fill="#5b6169" /><path d="M1 1l10 10" /></Icon>
        <Icon w={10} h={12} sw={1} color="#7fc4e0"><rect x="3.500" y="1" width="3" height="6" rx="1.500" /><path d="M1.500 5.500c0 4.500 7 4.500 7 0M5 9v2.500" /></Icon>
      </TrayIcons>
      <Lang>ENG<br />IN</Lang>
      <Icon w={12} sw={1.100}><path d="M1 4.500a7 7 0 0 1 10 0M2.700 6.300a4.600 4.600 0 0 1 6.600 0M4.400 8a2.300 2.300 0 0 1 3.200 0M6 9.700v.2" /></Icon>
      <Icon w={12} sw={1}><path d="M1 4.500h2L5.500 2v8L3 7.500H1zM7.300 4.500c.8 1 .8 2 0 3M8.800 3c1.600 2 1.600 4 0 6M10.300 2c2 2.500 2 5.500 0 8" /></Icon>
      <Icon w={14} h={10} sw={1}><rect x="1" y="2" width="11" height="6" rx="1.500" /><path d="M2.500 3.500h3v3h-3z" fill="currentColor" /><path d="M13.500 4v2" /></Icon>
      <Clock>16:48<br />08-03-2026</Clock>
    </Tray>
  </Taskbar>
);

export default function App() {
  return (
    <Page>
      <GlobalStyle />
      <BrowserChrome />
      <AppHeader />
      <EditToolbar />
      <Main>
        <AssetPanel><SplitGrip /></AssetPanel>
        <SheetArea>
          <SheetHeader>
            <SheetTitle>My new sheet (1)</SheetTitle>
            <Pager>
              <button aria-label="Previous sheet"><Icon w={16} sw={1.500}><path d="M10.500 2L5 8l5.500 6" /></Icon></button>
              <button aria-label="Next sheet"><Icon w={16} sw={1.300} color="#c9c9c9"><path d="M5.500 2L11 8l-5.500 6" /></Icon></button>
            </Pager>
          </SheetHeader>
          <Canvas>
            <GridRows>{Array.from({ length: 10 }, (_, i) => <span key={i} />)}</GridRows>
            <RankingChart />
            <Pointer width="10" height="14" viewBox="0 0 10 14"><path d="M1 1v11l2.600-2.300 1.700 3.600 1.900-.9-1.700-3.500H9z" fill="#fff" stroke="#333" /></Pointer>
          </Canvas>
          <SheetFooter>
            <ExtendButton>
              <Icon w={20} sw={2}><path d="M1 3h18M1 7h18" strokeLinecap="butt" /><path d="M10 10v5M7.500 13l2.500 3 2.500-3z" strokeWidth="1.500" fill="currentColor" /></Icon>
              Extend sheet
            </ExtendButton>
          </SheetFooter>
        </SheetArea>
        <PropertiesPanel />
      </Main>
      <WindowsTaskbar />
    </Page>
  );
}
